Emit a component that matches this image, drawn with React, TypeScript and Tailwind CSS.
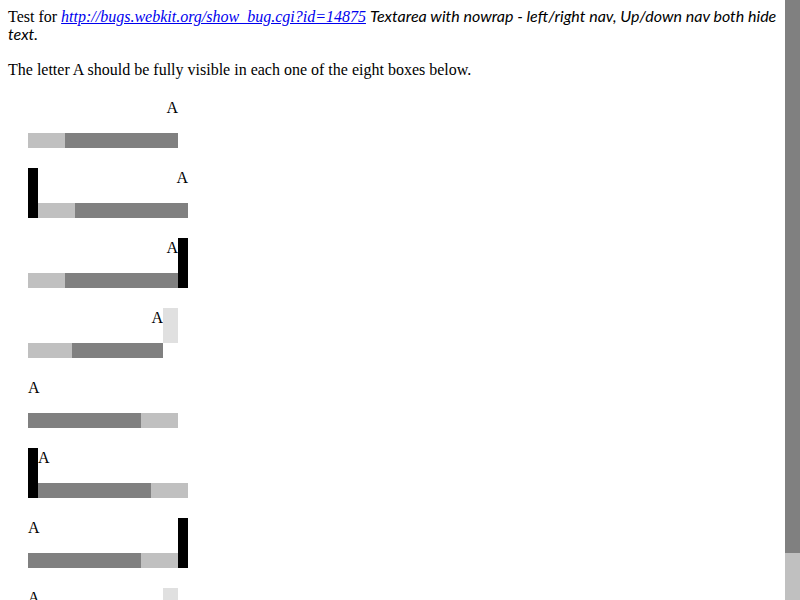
import React from "react";

function HBar({ lightFirst, lightW }: { lightFirst: boolean; lightW: number }) {
  const light = <div className="h-full bg-[#c0c0c0]" style={{ width: lightW }} />;
  const dark = <div className="h-full flex-1 bg-[#808080]" />;
  return (
    <div className="flex h-[15px] shrink-0">
      {lightFirst ? light : dark}
      {lightFirst ? dark : light}
    </div>
  );
}

function A({ right }: { right: boolean }) {
  return <div className={"flex-1 flex leading-[normal] pt-px " + (right ? "justify-end" : "justify-start")}>A</div>;
}

export default function App() {
  return (
    <div className="flex w-[800px] h-[600px] overflow-hidden bg-white text-black" style={{ fontFamily: '"Liberation Serif", "Times New Roman", serif' }}>
      <div className="flex-1 h-[600px] overflow-hidden p-2 text-[16px] leading-[normal]">
        <div className="leading-[18px]">
          Test for{" "}
          <a className="italic text-[#0000ee] underline" href="#">http://bugs.webkit.org/show_bug.cgi?id=14875</a>{" "}
          <i className="font-['Lato',sans-serif] leading-[0px]">Textarea with nowrap - left/right nav, Up/down nav both hide text.</i>
        </div>
        <p className="my-4 leading-[18px] pt-px">The letter A should be fully visible in each one of the eight boxes below.</p>

        {/* 1 */}
        <div className="mx-5 mb-5 mt-[19px] w-[150px] h-[50px] flex flex-col">
          <A right />
          <HBar lightFirst lightW={37} />
        </div>
        {/* 2 */}
        <div className="m-5 w-[160px] h-[50px] flex flex-col border-l-[10px] border-black">
          <A right />
          <HBar lightFirst lightW={37} />
        </div>
        {/* 3 */}
        <div className="m-5 w-[160px] h-[50px] flex flex-col border-r-[10px] border-black">
          <A right />
          <HBar lightFirst lightW={37} />
        </div>
        {/* 4 */}
        <div className="m-5 w-[150px] h-[50px] flex">
          <div className="flex-1 flex flex-col">
            <A right />
            <HBar lightFirst lightW={44} />
          </div>
          <div className="w-[15px] flex flex-col">
            <div className="flex-1 bg-[#e0e0e0]" />
            <div className="h-[15px] bg-white" />
          </div>
        </div>
        {/* 5 */}
        <div className="m-5 w-[150px] h-[50px] flex flex-col">
          <A right={false} />
          <HBar lightFirst={false} lightW={37} />
        </div>
        {/* 6 */}
        <div className="m-5 w-[160px] h-[50px] flex flex-col border-l-[10px] border-black">
          <A right={false} />
          <HBar lightFirst={false} lightW={37} />
        </div>
        {/* 7 */}
        <div className="m-5 w-[160px] h-[50px] flex flex-col border-r-[10px] border-black">
          <A right={false} />
          <HBar lightFirst={false} lightW={37} />
        </div>
        {/* 8 */}
        <div className="m-5 w-[150px] h-[50px] flex">
          <div className="flex-1 flex flex-col">
            <A right={false} />
            <HBar lightFirst={false} lightW={44} />
          </div>
          <div className="w-[15px] flex flex-col">
            <div className="flex-1 bg-[#e0e0e0]" />
            <div className="h-[15px] bg-white" />
          </div>
        </div>
      </div>
      <div className="w-[15px] h-[600px] flex flex-col shrink-0">
        <div className="h-[553px] bg-[#808080]" />
        <div className="flex-1 bg-[#c0c0c0]" />
      </div>
    </div>
  );
}
